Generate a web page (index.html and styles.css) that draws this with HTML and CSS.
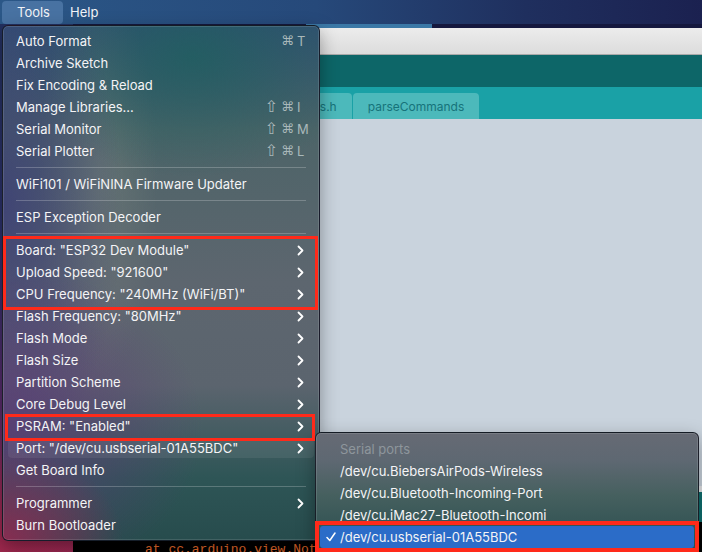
FILE: index.html
```html
<!DOCTYPE html>
<html>
<head>
<meta charset="utf-8">
<link rel="stylesheet" href="styles.css">
</head>
<body>
<div class="screen">
  <header class="menubar">
    <span class="mb-item active">Tools</span>
    <span class="mb-item">Help</span>
  </header>
  <div class="window">
    <div class="titlebar"></div>
    <div class="toolbar"></div>
    <div class="tabbar">
      <div class="tab">definitions.h</div>
      <div class="tab">parseCommands</div>
    </div>
    <div class="editor"></div>
    <div class="divider"></div>
    <div class="status"></div>
    <div class="console"><div class="console-line">at cc.arduino.view.Notif</div></div>
  </div>

  <div class="menu">
    <div class="row"><span class="label">Auto Format</span><span class="sc"><span class="mods">⌘</span><span class="key">T</span></span></div>
    <div class="row"><span class="label">Archive Sketch</span></div>
    <div class="row"><span class="label">Fix Encoding &amp; Reload</span></div>
    <div class="row"><span class="label">Manage Libraries...</span><span class="sc"><span class="mods"><span class="shift">⇧</span>⌘</span><span class="key">I</span></span></div>
    <div class="row"><span class="label">Serial Monitor</span><span class="sc"><span class="mods"><span class="shift">⇧</span>⌘</span><span class="key">M</span></span></div>
    <div class="row"><span class="label">Serial Plotter</span><span class="sc"><span class="mods"><span class="shift">⇧</span>⌘</span><span class="key">L</span></span></div>
    <div class="sep"></div>
    <div class="row"><span class="label">WiFi101 / WiFiNINA Firmware Updater</span></div>
    <div class="sep"></div>
    <div class="row"><span class="label">ESP Exception Decoder</span></div>
    <div class="sep"></div>
    <div class="row"><span class="label">Board: "ESP32 Dev Module"</span><svg class="chev" viewBox="0 0 7 11"><path d="M1.5 1.5 L5.5 5.5 L1.5 9.5"/></svg></div>
    <div class="row"><span class="label">Upload Speed: "921600"</span><svg class="chev" viewBox="0 0 7 11"><path d="M1.5 1.5 L5.5 5.5 L1.5 9.5"/></svg></div>
    <div class="row"><span class="label">CPU Frequency: "240MHz (WiFi/BT)"</span><svg class="chev" viewBox="0 0 7 11"><path d="M1.5 1.5 L5.5 5.5 L1.5 9.5"/></svg></div>
    <div class="row"><span class="label">Flash Frequency: "80MHz"</span><svg class="chev" viewBox="0 0 7 11"><path d="M1.5 1.5 L5.5 5.5 L1.5 9.5"/></svg></div>
    <div class="row"><span class="label">Flash Mode</span><svg class="chev" viewBox="0 0 7 11"><path d="M1.5 1.5 L5.5 5.5 L1.5 9.5"/></svg></div>
    <div class="row"><span class="label">Flash Size</span><svg class="chev" viewBox="0 0 7 11"><path d="M1.5 1.5 L5.5 5.5 L1.5 9.5"/></svg></div>
    <div class="row"><span class="label">Partition Scheme</span><svg class="chev" viewBox="0 0 7 11"><path d="M1.5 1.5 L5.5 5.5 L1.5 9.5"/></svg></div>
    <div class="row"><span class="label">Core Debug Level</span><svg class="chev" viewBox="0 0 7 11"><path d="M1.5 1.5 L5.5 5.5 L1.5 9.5"/></svg></div>
    <div class="row"><span class="label">PSRAM: "Enabled"</span><svg class="chev" viewBox="0 0 7 11"><path d="M1.5 1.5 L5.5 5.5 L1.5 9.5"/></svg></div>
    <div class="row hover"><span class="label">Port: "/dev/cu.usbserial-01A55BDC"</span><svg class="chev" viewBox="0 0 7 11"><path d="M1.5 1.5 L5.5 5.5 L1.5 9.5"/></svg></div>
    <div class="row"><span class="label">Get Board Info</span></div>
    <div class="sep"></div>
    <div class="row"><span class="label">Programmer</span><svg class="chev" viewBox="0 0 7 11"><path d="M1.5 1.5 L5.5 5.5 L1.5 9.5"/></svg></div>
    <div class="row"><span class="label">Burn Bootloader</span></div>
  </div>

  <div class="submenu">
    <div class="srow header">Serial ports</div>
    <div class="srow">/dev/cu.BiebersAirPods-Wireless</div>
    <div class="srow">/dev/cu.Bluetooth-Incoming-Port</div>
    <div class="srow">/dev/cu.iMac27-Bluetooth-Incomi</div>
    <div class="srow selected"><svg class="check" viewBox="0 0 10 10"><path d="M1 5.5 L3.8 8.5 L9 1"/></svg>/dev/cu.usbserial-01A55BDC</div>
  </div>

  <div class="mark mark-board"></div>
  <div class="mark mark-psram"></div>
  <div class="mark mark-port"></div>
</div>
</body>
</html>
```

FILE: styles.css
```css
* { box-sizing: border-box; }
html, body { margin: 0; padding: 0; }
body {
  width: 702px;
  height: 552px;
  overflow: hidden;
  font-family: Inter, "Liberation Sans", sans-serif;
  font-size: 13px;
}
.screen {
  position: relative;
  width: 702px;
  height: 552px;
  overflow: hidden;
  background:
    radial-gradient(ellipse 160px 140px at 0% 100%, #a0284e 0%, rgba(160,40,78,0) 100%),
    linear-gradient(180deg, #22305e 0%, #2c2f6a 45%, #5a2a68 75%, #8c2450 100%);
}

/* menu bar */
.menubar {
  height: 24px;
  display: flex;
  align-items: center;
  padding-left: 2px;
  background: linear-gradient(90deg, #2b5787 0%, #26497a 45%, #1f2f5e 75%, #1b2150 100%);
}
.mb-item {
  color: #f2f4f8;
  height: 23px;
  line-height: 23px;
  padding: 0 7px;
}
.mb-item.active {
  width: 61px;
  padding-left: 15px;
  background: #4872a2;
  border-radius: 4px;
}

/* app window */
.window {
  margin-left: 73px;
  padding-top: 4px;
  background: linear-gradient(90deg, #15183e 0%, #15183e 37%, #3b78a6 37%, #3b78a6 57%, #15183e 57%);
}
.titlebar {
  height: 27px;
  background: linear-gradient(180deg, #ececec 0%, #dcdcdc 100%);
  border-bottom: 1px solid #a9a9a9;
}
.toolbar {
  height: 32px;
  background: #0d6668;
}
.tabbar {
  height: 32px;
  background: #1aa1a6;
  display: flex;
  align-items: flex-end;
  gap: 1px;
  padding-left: 179px;
}
.tab {
  height: 26px;
  padding: 0 15px;
  background: #4cb9bb;
  color: #16737a;
  line-height: 27px;
  border-radius: 4px 4px 0 0;
  font-size: 12px;
}
.editor {
  height: 367px;
  background: #c9d3dd;
}
.divider {
  height: 6px;
  background: #e4e6e8;
}
.status {
  height: 30px;
  background: #0f7070;
}
.console {
  height: 60px;
  background: #000;
  padding: 20px 0 0 72px;
}
.console-line {
  font-family: "Liberation Mono", monospace;
  font-size: 13px;
  color: #e2682a;
  line-height: 16px;
}

/* main menu */
.menu {
  position: absolute;
  left: 2px;
  top: 25px;
  width: 318px;
  border: 1px solid rgba(18, 20, 30, 0.85);
  border-radius: 6px;
  padding: 4px 0;
  color: #f4f4f6;
  box-shadow: inset 0 0 0 1px rgba(255,255,255,0.12), 0 6px 18px rgba(0,0,0,0.35);
  background:
    radial-gradient(ellipse 120px 90px at 0% 100%, rgba(150,40,80,0.85) 0%, rgba(150,40,80,0) 100%),
    radial-gradient(ellipse 200px 160px at 0% 78%, rgba(95,55,120,0.75) 0%, rgba(95,55,120,0) 100%),
    radial-gradient(ellipse 120px 260px at 0% 35%, rgba(55,55,120,0.7) 0%, rgba(55,55,120,0) 100%),
    radial-gradient(ellipse 180px 120px at 60% 6%, rgba(30,95,95,0.8) 0%, rgba(30,95,95,0) 100%),
    radial-gradient(ellipse 60px 200px at 30% 30%, rgba(120,130,125,0.5) 0%, rgba(120,130,125,0) 100%),
    linear-gradient(180deg, #334f72 0%, #4d6468 20%, #5d666f 50%, #5b646e 70%, #2e5556 88%, #274c4d 100%);
}
.row {
  height: 22px;
  display: flex;
  align-items: center;
  justify-content: space-between;
  padding: 0 14px 0 13px;
  position: relative;
}
.row.hover::before {
  content: "";
  position: absolute;
  left: 5px;
  right: 5px;
  top: 2px;
  bottom: 1px;
  border-radius: 4px;
  background: rgba(255,255,255,0.07);
}
.label { position: relative; white-space: nowrap; }
.sc {
  display: flex;
  align-items: center;
  gap: 3px;
  margin-right: -2px;
  color: #a9b8ba;
}
.mods {
  display: flex;
  align-items: center;
  gap: 3px;
  font-family: "DejaVu Sans", sans-serif;
  font-size: 13px;
  line-height: 16px;
}
.shift {
  font-size: 16px;
  line-height: 16px;
}
.key {
  width: 10px;
  text-align: left;
  font-family: Inter, sans-serif;
  font-size: 13px;
  line-height: 16px;
}
.chev {
  width: 7px;
  height: 11px;
  margin-right: 1px;
  fill: none;
  stroke: #ffffff;
  stroke-width: 1.8;
  stroke-linecap: round;
  stroke-linejoin: round;
  position: relative;
}
.sep {
  height: 11px;
  display: flex;
  align-items: center;
  padding: 0 13px 0 13px;
}
.sep::before {
  content: "";
  flex: 1;
  height: 1px;
  background: rgba(255,255,255,0.22);
}

/* submenu */
.submenu {
  position: absolute;
  left: 315px;
  top: 432px;
  width: 384px;
  height: 140px;
  border: 1px solid rgba(18, 20, 30, 0.85);
  border-radius: 6px;
  padding: 5px 4px;
  box-shadow: inset 0 0 0 1px rgba(255,255,255,0.12), 0 6px 18px rgba(0,0,0,0.35);
  background: linear-gradient(180deg, #666a74 0%, #5e6872 20%, #46605f 45%, #2f5152 75%, #264848 100%);
  color: #f4f4f6;
}
.srow {
  height: 22px;
  display: flex;
  align-items: center;
  padding-left: 20px;
  border-radius: 3px;
  white-space: nowrap;
}
.srow.header { color: #8e969c; }
.srow.selected {
  background: #2b6cc8;
  padding-left: 6px;
}
.check {
  width: 10px;
  height: 10px;
  margin-right: 4px;
  fill: none;
  stroke: #ffffff;
  stroke-width: 1.5;
  stroke-linecap: round;
  stroke-linejoin: round;
}

/* red annotation boxes */
.mark {
  position: absolute;
  border: 3px solid #ff2a1a;
}
.mark-board { left: 3px; top: 236px; width: 315px; height: 74px; }
.mark-psram { left: 5px; top: 414px; width: 310px; height: 27px; }
.mark-port { left: 315px; top: 521px; width: 384px; height: 31px; border-width: 4px; }
```
